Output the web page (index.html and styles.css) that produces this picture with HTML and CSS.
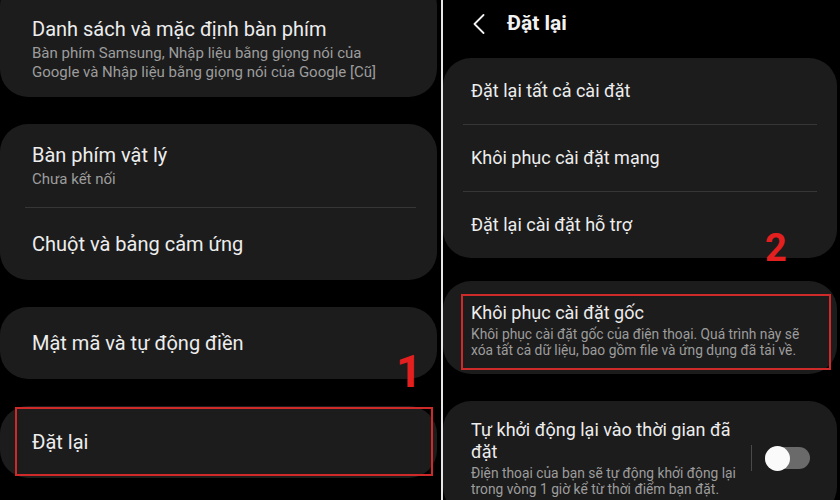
FILE: index.html
```html
<!DOCTYPE html>
<html lang="vi">
<head>
<meta charset="utf-8">
<title>Đặt lại</title>
<link rel="stylesheet" href="styles.css">
</head>
<body>
<div class="screen">
  <section class="panel left">
    <div class="card card-first">
      <div class="item two">
        <div class="title">Danh sách và mặc định bàn phím</div>
        <div class="sub">Bàn phím Samsung, Nhập liệu bằng giọng nói của Google và Nhập liệu bằng giọng nói của Google [Cũ]</div>
      </div>
    </div>
    <div class="card">
      <div class="item two">
        <div class="title">Bàn phím vật lý</div>
        <div class="sub">Chưa kết nối</div>
      </div>
      <div class="sep"></div>
      <div class="item one"><div class="title">Chuột và bảng cảm ứng</div></div>
    </div>
    <div class="card">
      <div class="item one"><div class="title">Mật mã và tự động điền</div></div>
    </div>
    <div class="card">
      <div class="item one"><div class="title">Đặt lại</div></div>
    </div>
    <span class="num num1">1</span>
    <div class="mark mark1"></div>
  </section>
  <div class="vline"></div>
  <section class="panel right">
    <header class="head">
      <svg class="back" width="12" height="20" viewBox="0 0 12 20"><polyline points="10.5,1 1.5,10 10.5,19" fill="none" stroke="#f2f2f2" stroke-width="1.8" stroke-linecap="round" stroke-linejoin="round"/></svg>
      <h1 class="head-title">Đặt lại</h1>
    </header>
    <div class="rcard">
      <div class="ritem"><div class="rtitle">Đặt lại tất cả cài đặt</div></div>
      <div class="rsep"></div>
      <div class="ritem"><div class="rtitle">Khôi phục cài đặt mạng</div></div>
      <div class="rsep"></div>
      <div class="ritem"><div class="rtitle">Đặt lại cài đặt hỗ trợ</div></div>
    </div>
    <div class="rcard rcard-factory">
      <div class="rtitle">Khôi phục cài đặt gốc</div>
      <div class="rsub">Khôi phục cài đặt gốc của điện thoại. Quá trình này sẽ xóa tất cả dữ liệu, bao gồm file và ứng dụng đã tải về.</div>
    </div>
    <div class="rcard rcard-auto">
      <div class="auto-text">
        <div class="rtitle">Tự khởi động lại vào thời gian đã đặt</div>
        <div class="rsub">Điện thoại của bạn sẽ tự động khởi động lại trong vòng 1 giờ kể từ thời điểm bạn đặt.</div>
      </div>
      <div class="vsep"></div>
      <div class="toggle"><span class="knob"></span></div>
    </div>
    <span class="num num2">2</span>
    <div class="mark mark2"></div>
  </section>
</div>
</body>
</html>
```
FILE: styles.css
```css
* { box-sizing: border-box; }
html, body { margin: 0; padding: 0; background: #000; }
body {
  width: 840px;
  height: 500px;
  overflow: hidden;
  font-family: Roboto, "Noto Sans", "DejaVu Sans", sans-serif;
  color: #ededed;
}
.screen {
  display: flex;
  width: 840px;
  height: 500px;
}
.panel {
  position: relative;
  height: 500px;
  overflow: hidden;
  display: flex;
  flex-direction: column;
}
.left {
  width: 441px;
  padding-right: 4px;
  gap: 27px;
}
.vline {
  width: 2px;
  height: 500px;
  background: #e6e6e6;
  flex: none;
}
.right {
  width: 397px;
  padding-right: 3px;
}
.card {
  background: #1c1c1c;
  border-radius: 28px;
  flex: none;
}
.card-first {
  margin-top: -22px;
  padding-top: 22px;
}
.item { padding: 0 32px; }
.item.two { padding-top: 19px; padding-bottom: 18px; }
.card-first .item.two { padding-top: 17px; padding-bottom: 15px; }
.item.one {
  height: 72px;
  display: flex;
  align-items: center;
}
.title {
  font-size: 20px;
  line-height: 24px;
  color: #ededed;
}
.sub {
  margin-top: 3px;
  font-size: 15px;
  line-height: 19px;
  color: #9c9c9c;
}
.sep {
  height: 1px;
  background: #363636;
  margin: 0 21px 0 25px;
}
.num {
  position: absolute;
  font-family: Roboto, "Liberation Sans", sans-serif;
  font-weight: 700;
  color: #e3201f;
  line-height: 1;
}
.num1 { left: 396px; top: 349px; font-size: 45px; }
.num2 { left: 322px; top: 229px; font-size: 38px; }
.mark {
  position: absolute;
  border: 2.5px solid #cf2a2a;
}
.mark1 { left: 15px; top: 407px; width: 418px; height: 69px; }
.mark2 { left: 18px; top: 294px; width: 370px; height: 76px; }

.head {
  height: 58px;
  display: flex;
  align-items: center;
  padding-left: 30px;
  padding-bottom: 12px;
  gap: 22px;
  flex: none;
}
.back { display: block; margin-top: 1px; }
.head-title {
  margin: 0;
  font-size: 21px;
  font-weight: 700;
  line-height: 24px;
  color: #f2f2f2;
}
.rcard {
  background: #1c1c1c;
  border-radius: 28px;
  flex: none;
}
.ritem {
  height: 66px;
  padding: 0 28px;
  display: flex;
  align-items: center;
}
.rsep {
  height: 1px;
  background: #363636;
  margin: 0 20px;
}
.rtitle {
  font-size: 18px;
  line-height: 22px;
  color: #ededed;
}
.rsub {
  margin-top: 2px;
  font-size: 13.8px;
  line-height: 16px;
  color: #9c9c9c;
}
.rcard-factory {
  margin-top: 23px;
  padding: 21px 28px 16px;
}
.rcard-auto {
  margin-top: 27px;
  padding: 18px 27px 18px 28px;
  display: flex;
  align-items: center;
}
.auto-text { flex: 1; min-width: 0; }
.vsep {
  width: 1px;
  height: 26px;
  background: #4a4a4a;
  margin-left: 6px;
  flex: none;
}
.toggle {
  margin-left: 13px;
  width: 45px;
  height: 22px;
  border-radius: 11px;
  background: #6a6a6a;
  display: flex;
  align-items: center;
  flex: none;
}
.knob {
  width: 25px;
  height: 25px;
  border-radius: 50%;
  background: #fafafa;
  flex: none;
}
```
